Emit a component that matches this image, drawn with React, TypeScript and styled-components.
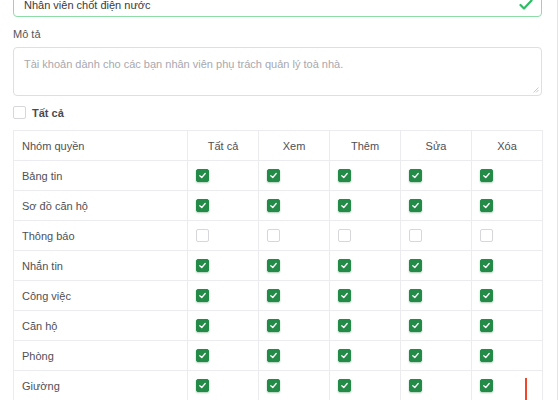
import React from "react";
import styled, { createGlobalStyle } from "styled-components";

const Global = createGlobalStyle`
  html, body { margin: 0; padding: 0; background: #fff; }
  body { font-family: "Liberation Sans", Arial, sans-serif; }
`;

const Page = styled.div`
  position: relative;
  width: 558px;
  height: 400px;
  overflow: hidden;
  border-right: 1px solid #e4e4e8;
  box-sizing: border-box;
`;

const Content = styled.div`
  padding: 0 15px 0 13px;
  display: flex;
  flex-direction: column;
`;

const InputBox = styled.div`
  margin-top: -15px;
  height: 32px;
  box-sizing: border-box;
  border: 1px solid #8ddca8;
  border-radius: 4px;
  display: flex;
  align-items: center;
  justify-content: space-between;
  padding: 0 8px 0 10px;
  font-size: 11px;
  color: #3a3a3a;
  padding-top: 8px;
`;

const Label = styled.div`
  margin-top: 11px;
  font-size: 11px;
  color: #555;
  line-height: 12px;
`;

const TextArea = styled.div`
  margin-top: 7px;
  height: 49px;
  box-sizing: border-box;
  border: 1px solid #dedee3;
  border-radius: 4px;
  padding: 10px 10px;
  font-size: 11px;
  color: #a8a8ae;
  position: relative;
`;

const Grip = styled.svg`
  position: absolute;
  right: 2px;
  bottom: 2px;
`;

const AllRow = styled.div`
  margin-top: 10px;
  display: flex;
  align-items: center;
  gap: 6px;
  font-size: 11px;
  font-weight: 700;
  color: #4a4a4e;
`;

const Box = styled.span<{ $on?: boolean }>`
  width: 13px;
  height: 13px;
  box-sizing: border-box;
  border-radius: 2px;
  display: inline-flex;
  align-items: center;
  justify-content: center;
  background: ${(p) => (p.$on ? "#238a48" : "#fff")};
  border: 1px solid ${(p) => (p.$on ? "#238a48" : "#d6d6dc")};
  box-shadow: ${(p) => (p.$on ? "0 1px 2px rgba(20,110,50,0.35)" : "none")};
`;

const Table = styled.table`
  margin-top: 11px;
  border-collapse: collapse;
  width: 530px;
  table-layout: fixed;
  font-size: 11px;
  color: #4f4f55;
`;

const Th = styled.th<{ $first?: boolean }>`
  height: 29px;
  padding: 0 ${(p) => (p.$first ? "8px" : "0")};
  border: 1px solid #ebebf0;
  font-weight: 400;
  text-align: ${(p) => (p.$first ? "left" : "center")};
  width: ${(p) => (p.$first ? "157px" : "auto")};
`;

const Td = styled.td<{ $first?: boolean }>`
  height: 29px;
  padding: 0 8px;
  border: 1px solid #ebebf0;
  vertical-align: middle;
`;

const CellInner = styled.div`
  display: flex;
  align-items: center;
`;

const RedMark = styled.div`
  position: absolute;
  left: 525px;
  top: 378px;
  width: 2px;
  height: 24px;
  background: #f0462c;
`;

const Check = () => (
  <svg width="9" height="9" viewBox="0 0 10 10">
    <polyline points="2,5.2 4.2,7.2 8,2.8" fill="none" stroke="#fff" strokeWidth="1.4" strokeLinecap="round" strokeLinejoin="round" />
  </svg>
);

const rows: [string, boolean][] = [
  ["Bảng tin", true],
  ["Sơ đồ căn hộ", true],
  ["Thông báo", false],
  ["Nhắn tin", true],
  ["Công việc", true],
  ["Căn hộ", true],
  ["Phòng", true],
  ["Giường", true],
];

const cols = ["Tất cả", "Xem", "Thêm", "Sửa", "Xóa"];

export default function App() {
  return (
    <>
      <Global />
      <Page>
        <Content>
          <InputBox>
            <span>Nhân viên chốt điện nước</span>
            <svg width="14" height="12" viewBox="0 0 14 12">
              <polyline points="1.5,6 5,9.5 12.5,1.5" fill="none" stroke="#2dbd62" strokeWidth="2.2" strokeLinecap="round" strokeLinejoin="round" />
            </svg>
          </InputBox>
          <Label>Mô tả</Label>
          <TextArea>
            Tài khoản dành cho các bạn nhân viên phụ trách quản lý toà nhà.
            <Grip width="6" height="6" viewBox="0 0 6 6">
              <line x1="0.5" y1="5.5" x2="5.5" y2="0.5" stroke="#bbb" strokeWidth="0.8" />
              <line x1="3" y1="5.5" x2="5.5" y2="3" stroke="#bbb" strokeWidth="0.8" />
            </Grip>
          </TextArea>
          <AllRow>
            <Box />
            <span>Tất cả</span>
          </AllRow>
          <Table>
            <thead>
              <tr>
                <Th $first>Nhóm quyền</Th>
                {cols.map((c) => (
                  <Th key={c}>{c}</Th>
                ))}
              </tr>
            </thead>
            <tbody>
              {rows.map(([name, on]) => (
                <tr key={name}>
                  <Td $first>{name}</Td>
                  {cols.map((c) => (
                    <Td key={c}>
                      <CellInner>
                        <Box $on={on}>{on && <Check />}</Box>
                      </CellInner>
                    </Td>
                  ))}
                </tr>
              ))}
            </tbody>
          </Table>
        </Content>
        <RedMark />
      </Page>
    </>
  );
}
